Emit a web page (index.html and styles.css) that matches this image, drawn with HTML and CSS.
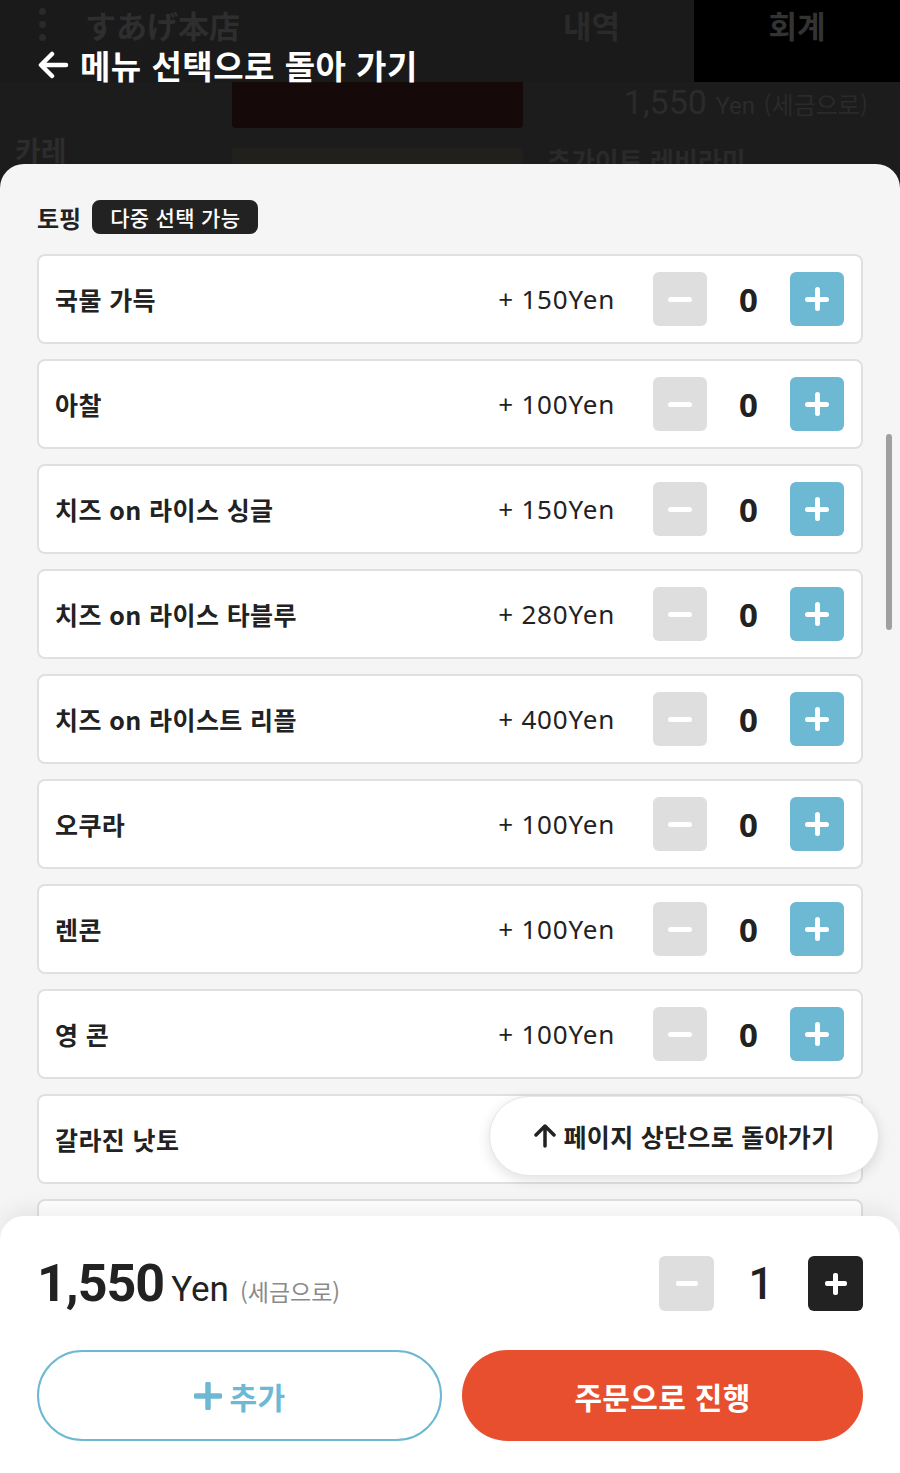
FILE: index.html
```html
<!DOCTYPE html>
<html lang="ko">
<head>
<meta charset="utf-8">
<link rel="stylesheet" href="styles.css">
</head>
<body>
<div class="app">
  <div class="bg">
    <div class="topbar">
      <div class="dots"><span></span><span></span><span></span></div>
      <div class="shop">すあげ本店</div>
      <div class="tab">내역</div>
      <div class="tab tab-dark">회계</div>
    </div>
    <div class="bg-row">
      <div class="bg-left"></div>
      <div class="bg-img img1"></div>
      <div class="bg-price">1,550 <small>Yen</small> <em>(세금으로)</em></div>
    </div>
    <div class="bg-row row2">
      <div class="bg-left cat">카레</div>
      <div class="bg-img img2"></div>
      <div class="bg-name">추가이트 레비라미</div>
    </div>
  </div>

  <a class="back">
    <svg width="32" height="28" viewBox="0 0 32 28"><path d="M29 14H5M15 3L4 14l11 11" fill="none" stroke="#fff" stroke-width="4.5" stroke-linecap="round" stroke-linejoin="round"/></svg>
    <span>메뉴 선택으로 돌아 가기</span>
  </a>

  <section class="sheet">
    <div class="sheet-body">
      <div class="title">
        <span class="title-text">토핑</span>
        <span class="badge">다중 선택 가능</span>
      </div>
      <ul class="list">
        <li class="item"><span class="name">국물 가득</span><span class="price">+ 150Yen</span><div class="stepper"><button class="btn minus"></button><span class="count">0</span><button class="btn plus"></button></div></li>
        <li class="item"><span class="name">아찰</span><span class="price">+ 100Yen</span><div class="stepper"><button class="btn minus"></button><span class="count">0</span><button class="btn plus"></button></div></li>
        <li class="item"><span class="name">치즈 on 라이스 싱글</span><span class="price">+ 150Yen</span><div class="stepper"><button class="btn minus"></button><span class="count">0</span><button class="btn plus"></button></div></li>
        <li class="item"><span class="name">치즈 on 라이스 타블루</span><span class="price">+ 280Yen</span><div class="stepper"><button class="btn minus"></button><span class="count">0</span><button class="btn plus"></button></div></li>
        <li class="item"><span class="name">치즈 on 라이스트 리플</span><span class="price">+ 400Yen</span><div class="stepper"><button class="btn minus"></button><span class="count">0</span><button class="btn plus"></button></div></li>
        <li class="item"><span class="name">오쿠라</span><span class="price">+ 100Yen</span><div class="stepper"><button class="btn minus"></button><span class="count">0</span><button class="btn plus"></button></div></li>
        <li class="item"><span class="name">렌콘</span><span class="price">+ 100Yen</span><div class="stepper"><button class="btn minus"></button><span class="count">0</span><button class="btn plus"></button></div></li>
        <li class="item"><span class="name">영 콘</span><span class="price">+ 100Yen</span><div class="stepper"><button class="btn minus"></button><span class="count">0</span><button class="btn plus"></button></div></li>
        <li class="item"><span class="name">갈라진 낫토</span></li>
        <li class="item"></li>
      </ul>
    </div>
    <div class="scrollbar"></div>
    <button class="to-top">
      <svg width="22" height="24" viewBox="0 0 22 24"><path d="M11 22V3M2 11l9-9 9 9" fill="none" stroke="#222" stroke-width="3.5" stroke-linecap="round" stroke-linejoin="round"/></svg>
      <span>페이지 상단으로 돌아가기</span>
    </button>
    <footer class="bottom">
      <div class="total-row">
        <div class="total"><span class="amount">1,550</span><span class="yen">Yen</span><span class="tax">(세금으로)</span></div>
        <div class="qty"><button class="qbtn qminus"></button><span class="qcount">1</span><button class="qbtn qplus"></button></div>
      </div>
      <div class="actions">
        <button class="add">
          <svg width="28" height="28" viewBox="0 0 28 28"><path d="M14 2v24M2 14h24" stroke="#6db9d3" stroke-width="5.5" stroke-linecap="round"/></svg>
          <span>추가</span>
        </button>
        <button class="order">주문으로 진행</button>
      </div>
    </footer>
  </section>
</div>
</body>
</html>
```

FILE: styles.css
```css
* { box-sizing: border-box; }
html, body { margin: 0; padding: 0; }
body {
  width: 900px;
  height: 1473px;
  overflow: hidden;
  background: #1c1c1c;
  font-family: "Noto Sans", "Noto Sans CJK KR", sans-serif;
  color: #222;
}
.app { position: relative; width: 900px; height: 1473px; overflow: hidden; }

/* dimmed background page */
.bg { display: flex; flex-direction: column; }
.topbar {
  height: 82px;
  display: flex;
  align-items: stretch;
  background: #1a1a1a;
}
.dots { width: 85px; display: flex; flex-direction: column; align-items: center; justify-content: flex-start; gap: 6px; padding-top: 8px; }
.dots span { width: 7px; height: 7px; border-radius: 50%; background: #2a2a2a; }
.shop {
  flex: 1;
  font-family: "Noto Sans CJK JP", sans-serif;
  font-weight: 700;
  font-size: 31px;
  color: #2e2e2e;
  line-height: 50px;
}
.tab {
  width: 205px;
  text-align: center;
  font-family: "Noto Sans CJK KR", sans-serif;
  font-weight: 700;
  font-size: 31px;
  line-height: 50px;
  color: #2a2a2a;
}
.tab-dark { width: 206px; background: #000; color: #333; }
.bg-row { display: flex; height: 58px; padding: 0 32px 0 0; }
.bg-left { width: 232px; }
.bg-img { width: 291px; height: 46px; }
.img1 { background: #150909; border-radius: 0 0 4px 4px; }
.img2 { background: #22201d; height: 20px; margin-top: 8px; border-radius: 4px 4px 0 0; }
.row2 { height: 24px; }
.bg-price {
  flex: 1;
  text-align: right;
  font-family: "Roboto", sans-serif;
  font-size: 34px;
  color: #2b2b2b;
  line-height: 40px;
}
.bg-price small { font-size: 24px; }
.bg-price em { font-style: normal; font-size: 24px; color: #2a2a2a; font-family: "Noto Sans CJK KR", sans-serif; }
.cat { font-family: "Noto Sans CJK KR", sans-serif; font-weight: 700; font-size: 28px; color: #2c2c2c; padding-left: 15px; line-height: 28px; margin-top: -4px; }
.bg-name { flex: 1; padding-left: 24px; font-family: "Noto Sans CJK KR", sans-serif; font-weight: 700; font-size: 26px; color: #2a2a2a; line-height: 40px; white-space: nowrap; }

/* back link overlay */
.back {
  position: absolute;
  left: 37px;
  top: 42px;
  display: flex;
  align-items: center;
  gap: 11px;
  color: #fff;
  font-family: "Noto Sans CJK KR", sans-serif;
  font-weight: 700;
  font-size: 33px;
  letter-spacing: 0.5px;
  line-height: 46px;
}

/* sheet */
.sheet {
  position: absolute;
  left: 0; right: 0; top: 164px; bottom: 0;
  background: #f5f5f5;
  border-radius: 24px 24px 0 0;
  overflow: hidden;
}
.sheet-body { padding: 36px 37px 0 37px; }
.title { display: flex; align-items: center; gap: 11px; height: 34px; }
.title-text { font-family: "Noto Sans CJK KR", sans-serif; font-weight: 700; font-size: 24px; color: #222; }
.badge {
  height: 34px;
  padding: 0 18px;
  background: #222;
  color: #fff;
  border-radius: 8px;
  font-family: "Noto Sans CJK KR", sans-serif;
  font-weight: 500;
  font-size: 21px;
  letter-spacing: 0.3px;
  line-height: 34px;
}
.list { list-style: none; margin: 20px 0 0; padding: 0; display: flex; flex-direction: column; gap: 15px; }
.item {
  height: 90px;
  flex-shrink: 0;
  background: #fff;
  border: 2px solid #e0e0e0;
  border-radius: 8px;
  display: flex;
  align-items: center;
  padding: 0 17px 0 16px;
}
.name { flex: 1; font-family: "Noto Sans CJK KR", sans-serif; font-weight: 700; font-size: 25px; letter-spacing: 0.4px; color: #222; }
.price { font-size: 26px; color: #222; margin-right: 38px; letter-spacing: 0.8px; }
.stepper { display: flex; align-items: center; }
.btn { width: 54px; height: 54px; border: 0; border-radius: 6px; padding: 0; position: relative; }
.minus { background: #dedede; }
.plus { background: #6db9d3; }
.btn::before, .plus::after {
  content: "";
  position: absolute;
  left: 50%; top: 50%;
  width: 24px; height: 5px;
  margin: -2.5px 0 0 -12px;
  border-radius: 3px;
  background: #fff;
}
.plus::after { width: 5px; height: 24px; margin: -12px 0 0 -2.5px; }
.count { width: 83px; text-align: center; font-weight: 700; font-size: 33px; color: #222; }

.scrollbar { position: absolute; right: 8px; top: 270px; width: 6px; height: 196px; border-radius: 3px; background: #a0a0a0; }

.to-top {
  position: absolute;
  left: 489px;
  top: 932px;
  width: 390px;
  height: 80px;
  border: 1px solid #e6e6e6;
  border-radius: 40px;
  background: #fff;
  box-shadow: 0 4px 14px rgba(0,0,0,0.12);
  display: flex;
  align-items: center;
  justify-content: center;
  gap: 8px;
  padding: 0;
  font-family: "Noto Sans CJK KR", sans-serif;
  font-weight: 700;
  font-size: 25px;
  letter-spacing: 0.3px;
  color: #222;
}

.bottom {
  position: absolute;
  left: 0; right: 0; bottom: 0;
  height: 257px;
  background: #fff;
  border-radius: 24px 24px 0 0;
  box-shadow: 0 -6px 22px rgba(0,0,0,0.07);
  padding: 40px 37px 0 37px;
}
.total-row { display: flex; align-items: center; justify-content: space-between; height: 55px; }
.total { display: flex; align-items: baseline; }
.amount { font-family: "Roboto", sans-serif; font-weight: 700; font-size: 52px; color: #222; letter-spacing: -1px; }
.yen { font-family: "Roboto", sans-serif; font-size: 35px; color: #222; margin-left: 7px; }
.tax { font-family: "Noto Sans CJK KR", sans-serif; font-size: 23px; color: #8a8a8a; margin-left: 11px; }
.qty { display: flex; align-items: center; }
.qbtn { width: 55px; height: 55px; border: 0; border-radius: 6px; position: relative; padding: 0; }
.qminus { background: #dedede; }
.qplus { background: #222; }
.qbtn::before, .qplus::after {
  content: "";
  position: absolute;
  left: 50%; top: 50%;
  width: 22px; height: 5px;
  margin: -2.5px 0 0 -11px;
  border-radius: 2px;
  background: #fff;
}
.qplus::after { width: 5px; height: 22px; margin: -11px 0 0 -2.5px; }
.qcount { width: 94px; text-align: center; font-family: "Roboto", sans-serif; font-weight: 500; font-size: 44px; color: #222; }

.actions { display: flex; gap: 20px; margin-top: 39px; }
.actions button {
  flex: 1;
  height: 91px;
  border-radius: 46px;
  font-family: "Noto Sans CJK KR", sans-serif;
  font-weight: 700;
  font-size: 30px;
  letter-spacing: 0.3px;
  display: flex;
  align-items: center;
  justify-content: center;
}
.add { background: #fff; border: 2px solid #6db9d3; color: #6db9d3; gap: 8px; }
.order { background: #e84f2f; border: 0; color: #fff; }
```
